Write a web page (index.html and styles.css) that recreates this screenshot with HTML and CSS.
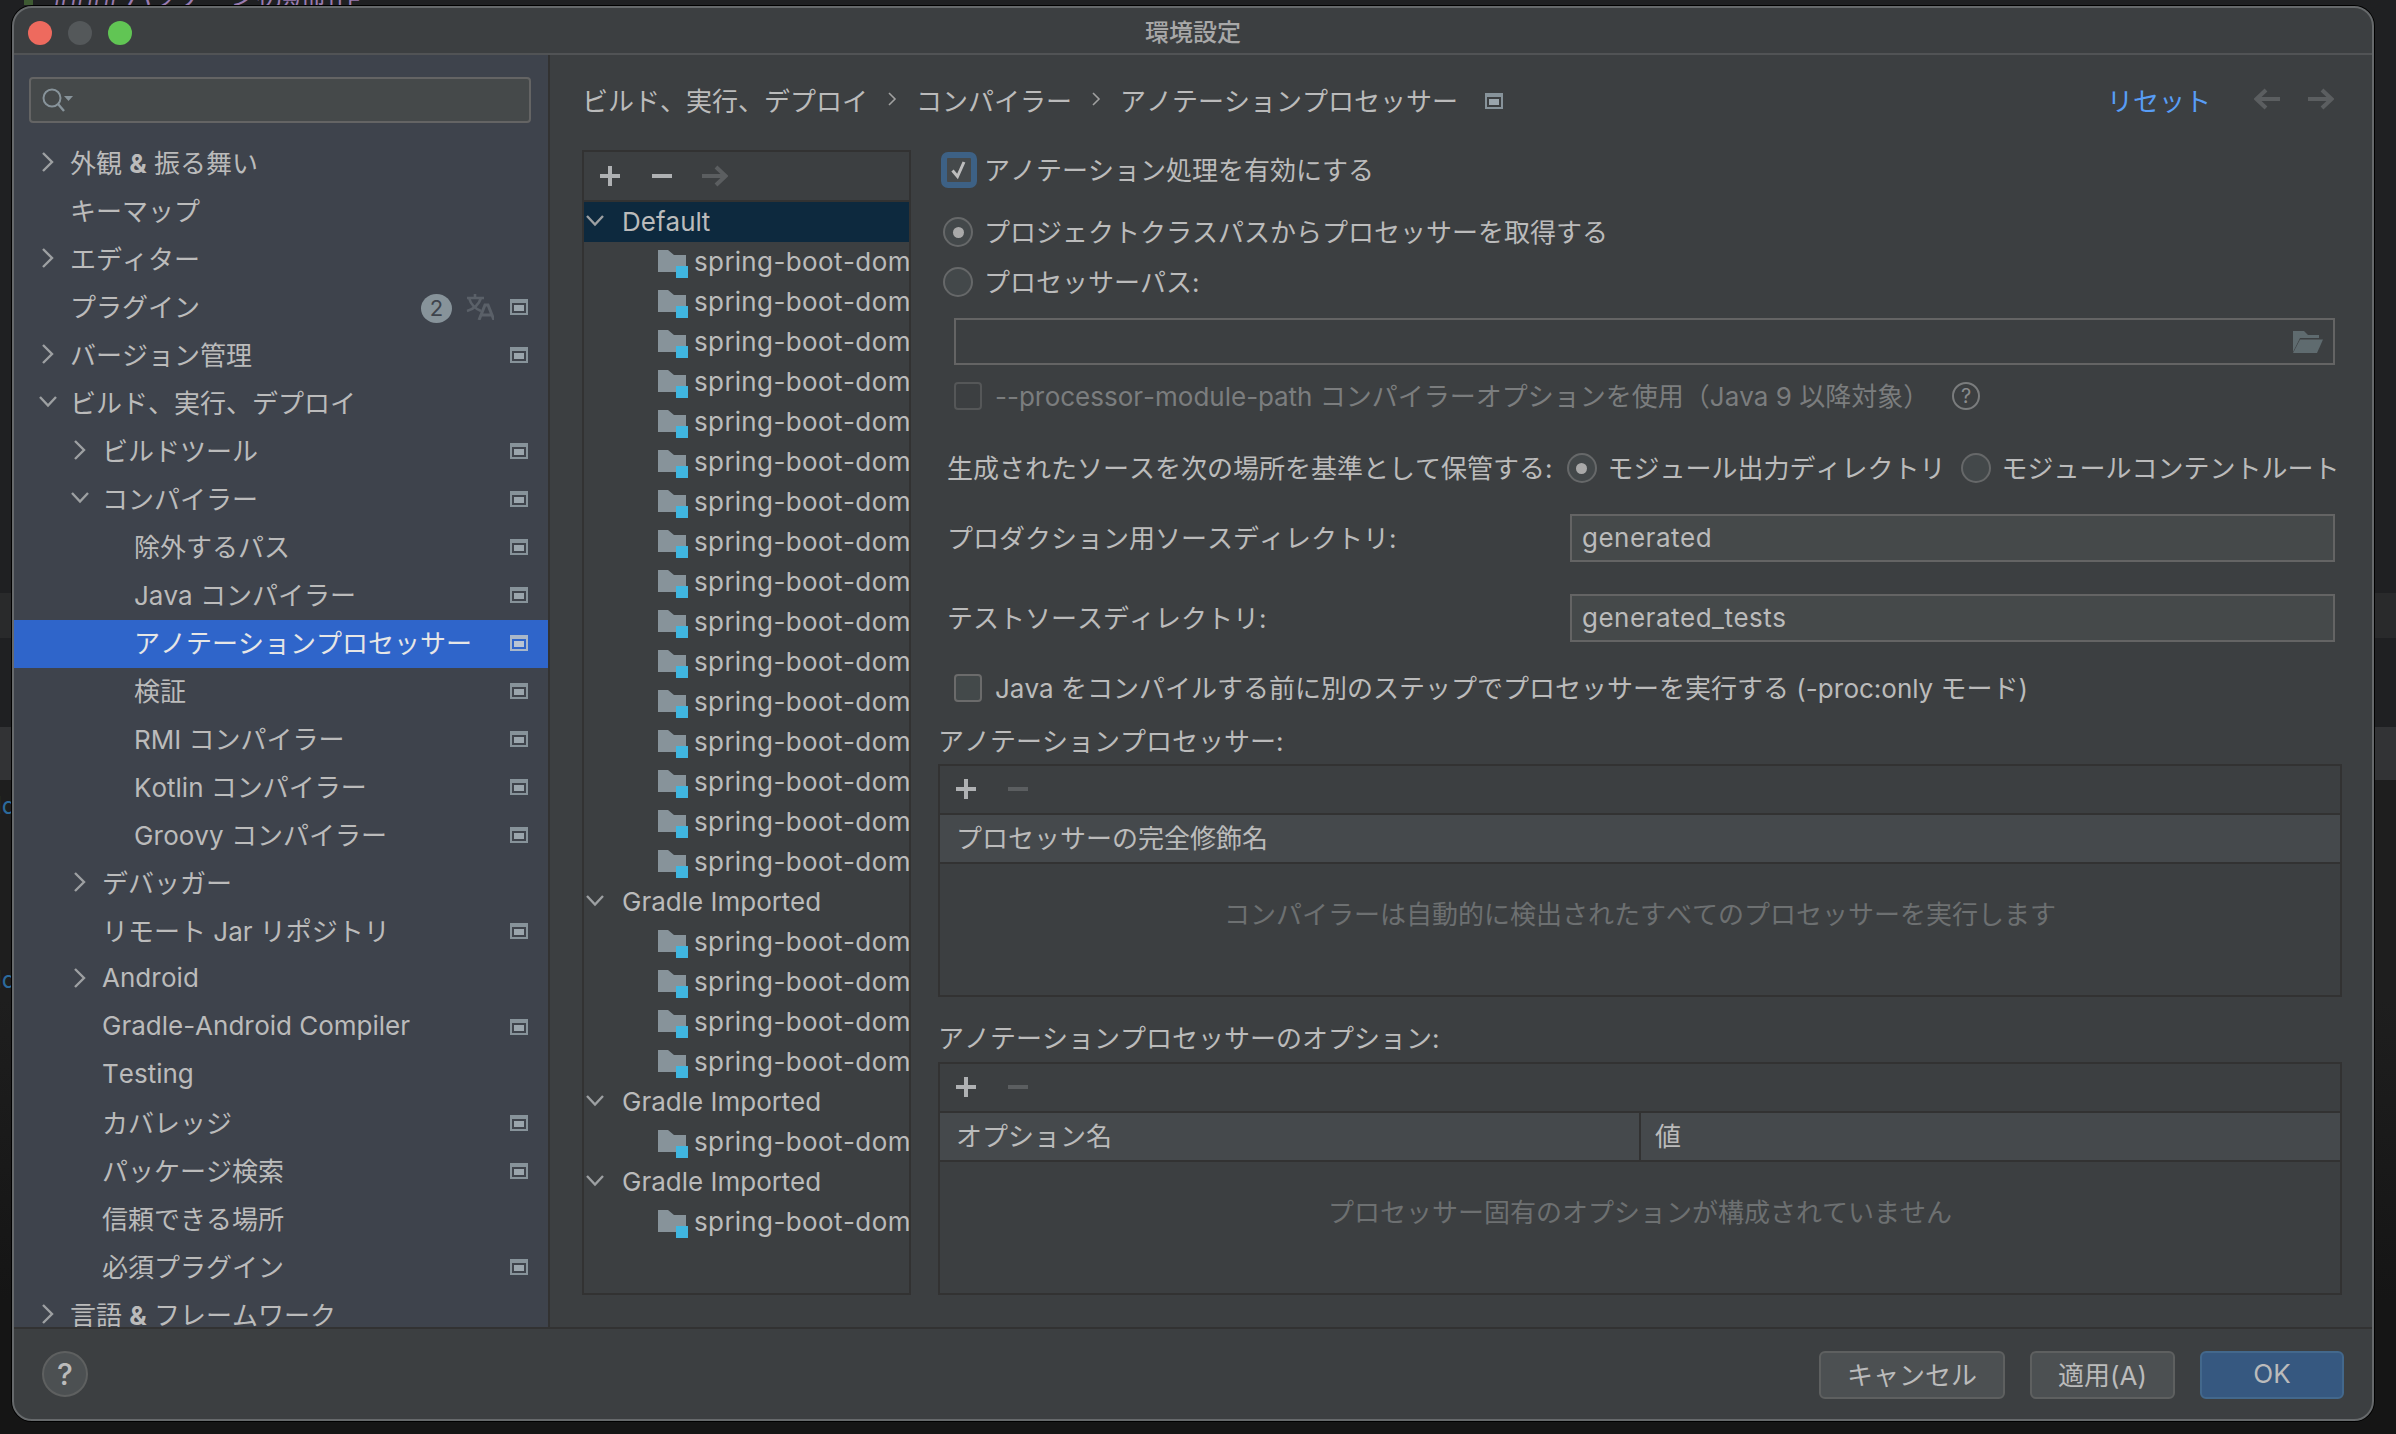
FILE: index.html
```html
<!DOCTYPE html>
<html lang="ja">
<head>
<meta charset="utf-8">
<title>環境設定</title>
<link rel="stylesheet" href="styles.css">
</head>
<body>
<svg class="defs" width="0" height="0">
  <defs>
    <symbol id="chev-r" viewBox="0 0 20 20"><path d="M5 1l9 9-9 9" fill="none" stroke="currentColor" stroke-width="2.4"/></symbol>
    <symbol id="chev-d" viewBox="0 0 20 20"><path d="M2 5l8 8.5L18 5" fill="none" stroke="currentColor" stroke-width="2.4"/></symbol>
    <symbol id="cfg" viewBox="0 0 18 16"><rect width="18" height="16" fill="#87939a"/><rect x="2" y="4" width="14" height="10" fill="#3f444c"/><rect x="4" y="6" width="10" height="6" fill="#9aa5ac"/></symbol>
    <symbol id="cfg-s" viewBox="0 0 18 16"><rect width="18" height="16" fill="#a9b7c9"/><rect x="2" y="4" width="14" height="10" fill="#2f65ca"/><rect x="4" y="6" width="10" height="6" fill="#b8c4d4"/></symbol>
    <symbol id="cfg-m" viewBox="0 0 18 16"><rect width="18" height="16" fill="#87939a"/><rect x="2" y="4" width="14" height="10" fill="#3c3f41"/><rect x="4" y="6" width="10" height="6" fill="#9aa5ac"/></symbol>
    <symbol id="plus" viewBox="0 0 20 20"><path d="M10 0v20M0 10h20" fill="none" stroke="currentColor" stroke-width="4"/></symbol>
    <symbol id="minus" viewBox="0 0 20 20"><path d="M0 10h20" fill="none" stroke="currentColor" stroke-width="4"/></symbol>
    <symbol id="arrow-r" viewBox="0 0 26 22"><path d="M0 11h24M14 2l9.500 9-9.500 9" fill="none" stroke="currentColor" stroke-width="4"/></symbol>
    <symbol id="arrow-l" viewBox="0 0 26 22"><path d="M26 11H2M12 2L2.500 11l9.500 9" fill="none" stroke="currentColor" stroke-width="4"/></symbol>
    <symbol id="mod" viewBox="0 0 30 28"><path d="M0 0h10l6 5h12v11H18v6H0z" fill="#87939a"/><rect x="18" y="16" width="12" height="12" fill="#40b6e0"/></symbol>
  </defs>
</svg>

<div class="scrap scrap-top"><span class="scrap-mark"></span>#### パッケージ初期制作</div>
<div class="scrap scrap-l1">ld</div>
<div class="scrap scrap-l2">ld</div>

<div class="window">
  <header class="titlebar">
    <div class="lights">
      <span class="light red"></span><span class="light gray"></span><span class="light green"></span>
    </div>
    <div class="title">環境設定</div>
    <div></div>
  </header>

  <div class="content">
    <aside class="sidebar">
      <div class="search">
        <svg class="search-ico" width="32" height="26" viewBox="0 0 32 26"><circle cx="11" cy="11" r="8.500" fill="none" stroke="#87939a" stroke-width="2"/><path d="M17 17l6 7" stroke="#87939a" stroke-width="2.400"/><path d="M23 9h9l-4.500 5z" fill="#87939a"/></svg>
      </div>
      <nav class="tree">
        <div class="row l0"><svg class="chev"><use href="#chev-r"/></svg><span>外観 <b>&amp;</b> 振る舞い</span></div>
        <div class="row l0"><span class="chev"></span><span>キーマップ</span></div>
        <div class="row l0"><svg class="chev"><use href="#chev-r"/></svg><span>エディター</span></div>
        <div class="row l0"><span class="chev"></span><span>プラグイン</span>
          <span class="badge">2</span>
          <svg class="xlate" width="28" height="26" viewBox="0 0 28 26"><path d="M1 4h17M9 0v4M3 4c2 7 7 11 12 13M15 4c-2 6-7 11-14 13" fill="none" stroke="#5a6068" stroke-width="2.600"/><path d="M13 26l6-15h3l6 15M15.500 21h10" fill="none" stroke="#5a6068" stroke-width="3"/></svg>
          <svg class="cfg"><use href="#cfg"/></svg></div>
        <div class="row l0"><svg class="chev"><use href="#chev-r"/></svg><span>バージョン管理</span><svg class="cfg"><use href="#cfg"/></svg></div>
        <div class="row l0"><svg class="chev"><use href="#chev-d"/></svg><span>ビルド、実行、デプロイ</span></div>
        <div class="row l1"><svg class="chev"><use href="#chev-r"/></svg><span>ビルドツール</span><svg class="cfg"><use href="#cfg"/></svg></div>
        <div class="row l1"><svg class="chev"><use href="#chev-d"/></svg><span>コンパイラー</span><svg class="cfg"><use href="#cfg"/></svg></div>
        <div class="row l2"><span class="chev"></span><span>除外するパス</span><svg class="cfg"><use href="#cfg"/></svg></div>
        <div class="row l2"><span class="chev"></span><span>Java コンパイラー</span><svg class="cfg"><use href="#cfg"/></svg></div>
        <div class="row l2 selected"><span class="chev"></span><span>アノテーションプロセッサー</span><svg class="cfg"><use href="#cfg-s"/></svg></div>
        <div class="row l2"><span class="chev"></span><span>検証</span><svg class="cfg"><use href="#cfg"/></svg></div>
        <div class="row l2"><span class="chev"></span><span>RMI コンパイラー</span><svg class="cfg"><use href="#cfg"/></svg></div>
        <div class="row l2"><span class="chev"></span><span>Kotlin コンパイラー</span><svg class="cfg"><use href="#cfg"/></svg></div>
        <div class="row l2"><span class="chev"></span><span>Groovy コンパイラー</span><svg class="cfg"><use href="#cfg"/></svg></div>
        <div class="row l1"><svg class="chev"><use href="#chev-r"/></svg><span>デバッガー</span></div>
        <div class="row l1"><span class="chev"></span><span>リモート Jar リポジトリ</span><svg class="cfg"><use href="#cfg"/></svg></div>
        <div class="row l1"><svg class="chev"><use href="#chev-r"/></svg><span>Android</span></div>
        <div class="row l1"><span class="chev"></span><span>Gradle-Android Compiler</span><svg class="cfg"><use href="#cfg"/></svg></div>
        <div class="row l1"><span class="chev"></span><span>Testing</span></div>
        <div class="row l1"><span class="chev"></span><span>カバレッジ</span><svg class="cfg"><use href="#cfg"/></svg></div>
        <div class="row l1"><span class="chev"></span><span>パッケージ検索</span><svg class="cfg"><use href="#cfg"/></svg></div>
        <div class="row l1"><span class="chev"></span><span>信頼できる場所</span></div>
        <div class="row l1"><span class="chev"></span><span>必須プラグイン</span><svg class="cfg"><use href="#cfg"/></svg></div>
        <div class="row l0"><svg class="chev"><use href="#chev-r"/></svg><span>言語 <b>&amp;</b> フレームワーク</span></div>
      </nav>
    </aside>

    <main class="pane">
      <div class="crumbs">
        <span>ビルド、実行、デプロイ</span>
        <svg class="crumb-sep" width="10" height="16" viewBox="0 0 10 16"><path d="M2 2l6 6-6 6" fill="none" stroke="#a0a0a0" stroke-width="1.600"/></svg>
        <span>コンパイラー</span>
        <svg class="crumb-sep" width="10" height="16" viewBox="0 0 10 16"><path d="M2 2l6 6-6 6" fill="none" stroke="#a0a0a0" stroke-width="1.600"/></svg>
        <span>アノテーションプロセッサー</span>
        <svg class="cfg crumb-cfg"><use href="#cfg-m"/></svg>
        <span class="reset">リセット</span>
        <svg class="nav-arrow" width="26" height="22"><use href="#arrow-l"/></svg>
        <svg class="nav-arrow" width="26" height="22"><use href="#arrow-r"/></svg>
      </div>

      <div class="columns">
        <section class="profiles">
          <div class="tb tb-profiles">
            <svg class="i-on" width="20" height="20"><use href="#plus"/></svg>
            <svg class="i-on" width="20" height="20"><use href="#minus"/></svg>
            <svg class="i-off" width="26" height="22"><use href="#arrow-r"/></svg>
          </div>
          <div class="plist">
            <div class="p-group p-sel"><svg class="chev"><use href="#chev-d"/></svg>Default</div>
            <div class="p-item"><svg class="mod"><use href="#mod"/></svg><span>spring-boot-dom</span></div>
            <div class="p-item"><svg class="mod"><use href="#mod"/></svg><span>spring-boot-dom</span></div>
            <div class="p-item"><svg class="mod"><use href="#mod"/></svg><span>spring-boot-dom</span></div>
            <div class="p-item"><svg class="mod"><use href="#mod"/></svg><span>spring-boot-dom</span></div>
            <div class="p-item"><svg class="mod"><use href="#mod"/></svg><span>spring-boot-dom</span></div>
            <div class="p-item"><svg class="mod"><use href="#mod"/></svg><span>spring-boot-dom</span></div>
            <div class="p-item"><svg class="mod"><use href="#mod"/></svg><span>spring-boot-dom</span></div>
            <div class="p-item"><svg class="mod"><use href="#mod"/></svg><span>spring-boot-dom</span></div>
            <div class="p-item"><svg class="mod"><use href="#mod"/></svg><span>spring-boot-dom</span></div>
            <div class="p-item"><svg class="mod"><use href="#mod"/></svg><span>spring-boot-dom</span></div>
            <div class="p-item"><svg class="mod"><use href="#mod"/></svg><span>spring-boot-dom</span></div>
            <div class="p-item"><svg class="mod"><use href="#mod"/></svg><span>spring-boot-dom</span></div>
            <div class="p-item"><svg class="mod"><use href="#mod"/></svg><span>spring-boot-dom</span></div>
            <div class="p-item"><svg class="mod"><use href="#mod"/></svg><span>spring-boot-dom</span></div>
            <div class="p-item"><svg class="mod"><use href="#mod"/></svg><span>spring-boot-dom</span></div>
            <div class="p-item"><svg class="mod"><use href="#mod"/></svg><span>spring-boot-dom</span></div>
            <div class="p-group"><svg class="chev"><use href="#chev-d"/></svg>Gradle Imported</div>
            <div class="p-item"><svg class="mod"><use href="#mod"/></svg><span>spring-boot-dom</span></div>
            <div class="p-item"><svg class="mod"><use href="#mod"/></svg><span>spring-boot-dom</span></div>
            <div class="p-item"><svg class="mod"><use href="#mod"/></svg><span>spring-boot-dom</span></div>
            <div class="p-item"><svg class="mod"><use href="#mod"/></svg><span>spring-boot-dom</span></div>
            <div class="p-group"><svg class="chev"><use href="#chev-d"/></svg>Gradle Imported</div>
            <div class="p-item"><svg class="mod"><use href="#mod"/></svg><span>spring-boot-dom</span></div>
            <div class="p-group"><svg class="chev"><use href="#chev-d"/></svg>Gradle Imported</div>
            <div class="p-item"><svg class="mod"><use href="#mod"/></svg><span>spring-boot-dom</span></div>
          </div>
        </section>

        <section class="form">
          <div class="f-row f-enable">
            <span class="check-focus"><svg width="24" height="24" viewBox="0 0 24 24"><path d="M5.500 12.500l5 6L17 4" fill="none" stroke="#bdbdbd" stroke-width="3"/></svg></span>
            <span>アノテーション処理を有効にする</span>
          </div>
          <div class="f-row f-radio1"><span class="radio on"></span><span>プロジェクトクラスパスからプロセッサーを取得する</span></div>
          <div class="f-row f-radio2"><span class="radio"></span><span>プロセッサーパス:</span></div>
          <div class="path-field">
            <svg width="30" height="22" viewBox="0 0 30 22"><path d="M0 0h11l4 4h11v3H7L0 21z" fill="#5f6b6f"/><path d="M7 8.500h23L24 22H0z" fill="#5f6b6f"/></svg>
          </div>
          <div class="f-row f-mod">
            <span class="check"></span>
            <span class="muted">--processor-module-path コンパイラーオプションを使用（Java 9 以降対象）</span>
            <span class="hint">?</span>
          </div>
          <div class="f-row f-store">
            <span>生成されたソースを次の場所を基準として保管する:</span>
            <span class="radio on"></span><span>モジュール出力ディレクトリ</span>
            <span class="radio second"></span><span>モジュールコンテントルート</span>
          </div>
          <div class="f-field f-prod"><label class="f-label">プロダクション用ソースディレクトリ:</label><div class="input">generated</div></div>
          <div class="f-field f-test"><label class="f-label">テストソースディレクトリ:</label><div class="input">generated_tests</div></div>
          <div class="f-row f-proc">
            <span class="check"></span>
            <span>Java をコンパイルする前に別のステップでプロセッサーを実行する (-proc:only モード)</span>
          </div>

          <div class="sec-label sec-a">アノテーションプロセッサー:</div>
          <div class="tbl tbl-a">
            <div class="tb tb-tbl">
              <svg class="i-on" width="20" height="20"><use href="#plus"/></svg>
              <svg class="i-off" width="20" height="20"><use href="#minus"/></svg>
            </div>
            <div class="thead"><div class="th">プロセッサーの完全修飾名</div></div>
            <div class="empty">コンパイラーは自動的に検出されたすべてのプロセッサーを実行します</div>
          </div>

          <div class="sec-label sec-b">アノテーションプロセッサーのオプション:</div>
          <div class="tbl tbl-b">
            <div class="tb tb-tbl">
              <svg class="i-on" width="20" height="20"><use href="#plus"/></svg>
              <svg class="i-off" width="20" height="20"><use href="#minus"/></svg>
            </div>
            <div class="thead"><div class="th th-half">オプション名</div><div class="th">値</div></div>
            <div class="empty">プロセッサー固有のオプションが構成されていません</div>
          </div>
        </section>
      </div>
    </main>
  </div>

  <footer class="footer">
    <button class="btn-help">?</button>
    <div class="actions">
      <button class="btn btn-cancel">キャンセル</button>
      <button class="btn btn-apply">適用(A)</button>
      <button class="btn btn-ok">OK</button>
    </div>
  </footer>
</div>
</body>
</html>
```

FILE: styles.css
```css
* { box-sizing: border-box; }
html, body { margin: 0; height: 100%; }
body {
  width: 2396px;
  height: 1434px;
  overflow: hidden;
  position: relative;
  padding: 6px 22px 13px 12px;
  font-family: "Inter", "Noto Sans CJK JP", sans-serif;
  font-size: 26px;
  font-kerning: none;
  color: #bbbbbb;
  background:
    linear-gradient(#1f2022 0 593px, #292a2b 593px 638px, #1f2022 638px 727px, #323335 727px 780px, #1e1e1e 780px 1000px, #151515 1300px);
}
.defs { position: absolute; }

.scrap { position: absolute; white-space: nowrap; line-height: 1; }
.scrap-top { left: 24px; top: -21px; color: #9a7bb0; text-decoration: underline; font-size: 26px; }
.scrap-mark { display: inline-block; width: 9px; height: 26px; background: #3e5a32; margin-right: 20px; }
.scrap-l1, .scrap-l2 { left: -4px; color: #2c6a9c; font-size: 24px; }
.scrap-l1 { top: 794px; }
.scrap-l2 { top: 968px; }

.window {
  position: relative;
  width: 2362px;
  height: 1415px;
  display: flex;
  flex-direction: column;
  background: #3c3f41;
  border: 2px solid #66696b;
  border-radius: 20px;
  box-shadow: 0 0 0 1px #000;
  overflow: hidden;
}

.titlebar {
  height: 47px;
  flex: none;
  display: grid;
  grid-template-columns: 1fr auto 1fr;
  align-items: center;
  padding-top: 4px;
  border-bottom: 2px solid #515355;
}
.lights { display: flex; gap: 16px; padding-left: 14px; }
.light { width: 24px; height: 24px; border-radius: 50%; }
.red { background: #ee6a5e; }
.gray { background: #54585a; }
.green { background: #61c554; }
.title { font-size: 24px; font-weight: 500; color: #a8a8a8; padding-bottom: 4px; }

.content { flex: 1; min-height: 0; display: flex; }

.sidebar {
  width: 536px;
  flex: none;
  background: #3e434c;
  border-right: 2px solid #323232;
  overflow: hidden;
}
.search {
  height: 46px;
  margin: 22px 17px 0 15px;
  background: #45494a;
  border: 2px solid #646464;
  border-radius: 4px;
  display: flex;
  align-items: center;
  padding-left: 10px;
}
.tree { margin-top: 17px; }
.row {
  height: 48px;
  display: flex;
  align-items: center;
  padding-bottom: 5px;
  white-space: nowrap;
}
.row b { font-weight: 700; }
.l0 { padding-left: 24px; }
.l1 { padding-left: 56px; }
.l2 { padding-left: 88px; }
.chev { width: 20px; height: 20px; flex: none; margin-right: 12px; color: #9da0a2; }
.selected { background: #2f65ca; color: #e6e6e6; }
.cfg { width: 18px; height: 16px; flex: none; margin-left: auto; margin-right: 20px; }
.row .cfg { position: relative; top: 1px; }
.row .badge + .xlate + .cfg { margin-left: 16px; }
.badge {
  margin-left: auto;
  width: 31px;
  height: 29px;
  border-radius: 50%;
  background: #87939a;
  color: #3e434c;
  font-size: 22px;
  line-height: 29px;
  text-align: center;
  position: relative;
  top: 3px;
}
.xlate { margin-left: 14px; position: relative; top: 1px; }

.pane { flex: 1; min-width: 0; display: flex; flex-direction: column; padding-left: 32px; }
.crumbs {
  height: 95px;
  flex: none;
  display: flex;
  align-items: center;
  padding-right: 38px;
  padding-bottom: 7px;
  white-space: nowrap;
}
.crumb-sep { margin: 0 19px; flex: none; }
.crumb-cfg { margin-left: 27px; margin-right: 0; position: relative; top: 2px; }
.reset { margin-left: auto; color: #589df6; }
.nav-arrow { color: #5b5e60; margin-left: 43px; flex: none; }
.nav-arrow + .nav-arrow { margin-left: 28px; }

.columns { flex: 1; min-height: 0; display: flex; }

.profiles {
  width: 329px;
  height: 1145px;
  flex: none;
  border: 2px solid #323232;
  display: flex;
  flex-direction: column;
}
.tb { display: flex; align-items: center; flex: none; border-bottom: 2px solid #323232; }
.tb-profiles { height: 50px; padding-left: 16px; gap: 32px; }
.tb-profiles .i-off { margin-left: -2px; }
.i-on { color: #afb1b3; flex: none; }
.i-off { color: #5b5e60; flex: none; }
.plist { flex: 1; overflow: hidden; }
.p-group { height: 40px; display: flex; align-items: center; white-space: nowrap; padding-left: 1px; padding-bottom: 2px; }
.p-group .chev { margin-right: 17px; }
.p-sel { background: #0d293e; }
.p-item { height: 40px; display: flex; align-items: center; padding-left: 74px; white-space: nowrap; overflow: hidden; }
.p-item span { letter-spacing: 0.4px; padding-bottom: 2px; }
.mod { width: 30px; height: 28px; flex: none; margin-right: 6px; position: relative; top: 2px; }

.form { flex: none; margin-left: 27px; width: 1404px; }
.f-row { height: 40px; display: flex; align-items: center; white-space: nowrap; }
.f-row > span:not([class]), .f-row > .muted { padding-bottom: 3px; }
.f-enable { gap: 7px; padding-left: 3px; }
.f-radio1 { margin-top: 22px; gap: 11px; padding-left: 5px; }
.f-radio2 { margin-top: 10px; gap: 11px; padding-left: 5px; }
.f-mod { margin-top: 11px; gap: 13px; padding-left: 16px; }
.f-store { margin-top: 32px; padding-left: 9px; }
.f-store .radio { margin: 0 11px 0 14px; }
.f-store .radio.second { margin-left: 15px; }
.f-proc { margin-top: 26px; gap: 13px; padding-left: 16px; }
.muted { color: #7b7d7e; }

.check-focus {
  width: 36px;
  height: 36px;
  border: 6px solid #3d6185;
  border-radius: 7px;
  background: #45494b;
  flex: none;
  display: block;
}
.check-focus svg { display: block; }
.check { width: 28px; height: 28px; border: 2px solid #555758; border-radius: 4px; flex: none; }
.f-proc .check { border-color: #6b6b6b; background: #43494a; }
.radio {
  width: 30px;
  height: 30px;
  border-radius: 50%;
  border: 2px solid #666869;
  background: #43484a;
  flex: none;
  display: flex;
  align-items: center;
  justify-content: center;
}
.radio.on::after { content: ""; width: 11px; height: 11px; border-radius: 50%; background: #a9a9a9; }
.hint {
  width: 28px;
  height: 28px;
  border: 2px solid #7a7c7d;
  border-radius: 50%;
  color: #8a8c8d;
  font-size: 20px;
  line-height: 24px;
  text-align: center;
  flex: none;
  margin-left: 10px;
}

.path-field {
  height: 47px;
  margin: 16px 7px 0 16px;
  border: 2px solid #646464;
  display: flex;
  align-items: center;
  justify-content: flex-end;
  padding-right: 10px;
}
.f-field { display: flex; align-items: center; height: 48px; padding-left: 9px; padding-right: 7px; }
.f-prod { margin-top: 26px; }
.f-test { margin-top: 32px; }
.f-label { width: 623px; flex: none; padding-bottom: 4px; }
.input {
  flex: 1;
  height: 48px;
  background: #45494a;
  border: 2px solid #646464;
  padding-left: 10px;
  line-height: 44px;
  letter-spacing: 0.5px;
}

.sec-label { height: 40px; display: flex; align-items: center; padding-bottom: 5px; }
.sec-a { margin-top: 14px; }
.sec-b { margin-top: 22px; }

.tbl { border: 2px solid #323232; display: flex; flex-direction: column; }
.tbl-a { margin-top: 2px; height: 233px; }
.tbl-b { margin-top: 3px; height: 233px; }
.tb-tbl { height: 49px; padding-left: 16px; padding-bottom: 2px; gap: 32px; }
.thead { height: 49px; flex: none; display: flex; background: #45494c; border-bottom: 2px solid #323232; }
.th { padding-left: 16px; line-height: 47px; flex: 1; }
.th-half { flex: none; width: 701px; border-right: 2px solid #323232; }
.th-half + .th { padding-left: 14px; }
.empty { flex: 1; display: flex; align-items: center; justify-content: center; color: #6d7071; padding-bottom: 34px; }

.footer {
  height: 92px;
  flex: none;
  display: flex;
  justify-content: space-between;
  align-items: flex-start;
  padding: 22px 28px 0;
  border-top: 2px solid #323232;
}
.btn-help {
  width: 46px;
  height: 46px;
  border-radius: 50%;
  border: 2px solid #5e6060;
  background: #4c5052;
  color: #bbbbbb;
  font: 500 30px "Inter", sans-serif;
  padding: 0;
}
.actions { display: flex; gap: 25px; }
.btn {
  height: 48px;
  border-radius: 6px;
  border: 2px solid #5e6060;
  background: #4c5052;
  color: #bbbbbb;
  font: 26px "Inter", "Noto Sans CJK JP", sans-serif;
  font-kerning: none;
  padding: 0 0 3px;
}
.btn-cancel { width: 186px; }
.btn-apply { width: 145px; }
.btn-ok { width: 144px; background: #365880; border-color: #43688c; }
```
